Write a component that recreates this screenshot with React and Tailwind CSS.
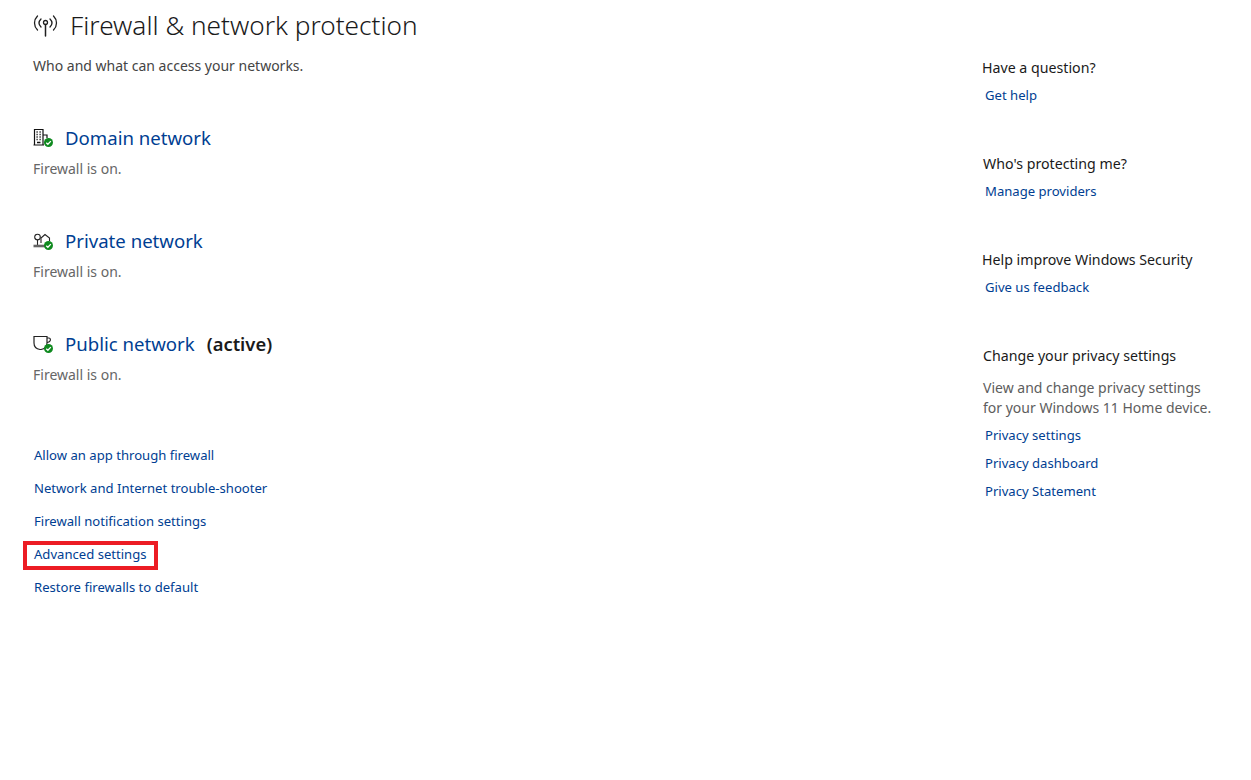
import React from 'react';

function NetworkIcon() {
  return (
    <svg width="26" height="24" viewBox="0 0 26 24" fill="none" stroke="#1f1f1f" strokeWidth="1.3" strokeLinecap="round">
      <path d="M4.5 2C0.5 6 0.5 12 4.5 16" />
      <path d="M20.5 2C24.5 6 24.5 12 20.5 16" />
      <path d="M8 5C5.5 7.5 5.5 10.5 8 13" />
      <path d="M17 5C19.5 7.5 19.5 10.5 17 13" />
      <circle cx="12.5" cy="8.5" r="2" />
      <path d="M12.5 10.5V22" strokeWidth="1.5" />
    </svg>
  );
}

function Check() {
  return (
    <svg className="absolute left-[10.5px] top-[9.5px]" width="9" height="9" viewBox="0 0 10 10">
      <circle cx="5" cy="5" r="5" fill="#0f8a1f" />
      <path d="M2.5 5.2L4.3 7L7.6 3.4" fill="none" stroke="#fff" strokeWidth="1.4" />
    </svg>
  );
}

function DomainIcon() {
  return (
    <div className="relative w-[20px] h-[20px] shrink-0">
      <svg width="20" height="20" viewBox="0 0 20 20" fill="none" stroke="#111" strokeWidth="1.2">
        <path d="M1.5 17V1.5H10V17M10 7H14V10M0.5 17H11" />
        <path d="M3.5 4H4.7M6.5 4H7.7M3.5 6.5H4.7M6.5 6.5H7.7M3.5 9H4.7M6.5 9H7.7M3.5 11.5H4.7M6.5 11.5H7.7M4 14.5H7.5" strokeWidth="1.3" />
      </svg>
      <Check />
    </div>
  );
}

function PrivateIcon() {
  return (
    <div className="relative w-[20px] h-[20px] shrink-0">
      <svg width="20" height="20" viewBox="0 0 20 20" fill="none" stroke="#222" strokeWidth="1.1">
        <circle cx="4.5" cy="6" r="2.8" />
        <path d="M4.5 8.8V14" />
        <path d="M8 12V7L12 3.5L16.5 7V10" />
        <path d="M0.5 15H14" stroke="#666" strokeWidth="2.6" />
      </svg>
      <Check />
    </div>
  );
}

function PublicIcon() {
  return (
    <div className="relative w-[20px] h-[20px] shrink-0">
      <svg width="20" height="20" viewBox="0 0 20 20" fill="none" stroke="#222" strokeWidth="1.2">
        <path d="M1 2.5H14V9C14 12.5 11.5 15 8 15.5H7C3.5 15 1 12.5 1 9Z" />
        <path d="M14 4H16C17.6 4 17.6 6 17 7C16.5 7.8 15.5 8.3 14 8.5" />
      </svg>
      <Check />
    </div>
  );
}

function Network({ icon, name, active }) {
  return (
    <div className="h-[103px]">
      <div className="flex items-center h-[28px]">
        <div className="w-[32px]">{icon}</div>
        <a className="text-[18.6px] text-[#003e92]">{name}</a>
        {active && <span className="ml-[12px] text-[18.4px] font-semibold text-[#1a1a1a]">(active)</span>}
      </div>
      <p className="mt-[7px] text-[14px] leading-[20px] text-[#666]">Firewall is on.</p>
    </div>
  );
}

function SideBlock({ title, desc, links, indent = 'pl-0' }) {
  return (
    <div className="mb-[42px]">
      <h3 className={`text-[14.2px] leading-[20px] text-[#1a1a1a] ${indent}`}>{title}</h3>
      {desc && <p className="mt-[12px] pl-[1px] text-[14px] leading-[20px] text-[#5d5d5d] whitespace-pre-line">{desc}</p>}
      <div className="mt-[6px] flex flex-col pl-[3px]">
        {links.map((l) => (
          <a key={l} className="h-[28px] leading-[20px] pt-[1px] text-[13.1px] text-[#003e92]">{l}</a>
        ))}
      </div>
    </div>
  );
}

export default function App() {
  return (
    <div className="flex min-h-screen bg-white font-['Noto_Sans','Open_Sans',sans-serif]">
      <div className="w-[982px] shrink-0 pl-[33px]">
        <div className="flex items-center h-[50px] pt-[1px]">
          <div className="w-[37px]"><NetworkIcon /></div>
          <h1 className="text-[26.2px] font-light text-[#1a1a1a]">Firewall &amp; network protection</h1>
        </div>
        <p className="mt-[6px] text-[14px] leading-[20px] text-[#444]">Who and what can access your networks.</p>
        <div className="mt-[48px]">
          <Network icon={<DomainIcon />} name="Domain network" />
          <Network icon={<PrivateIcon />} name="Private network" />
          <Network icon={<PublicIcon />} name="Public network" active />
        </div>
        <div className="mt-[6px] pl-[1px] flex flex-col text-[13.1px] text-[#003e92]">
          <a className="h-[33px] leading-[33px]">Allow an app through firewall</a>
          <a className="h-[33px] leading-[33px]">Network and Internet trouble-shooter</a>
          <a className="h-[33px] leading-[33px]">Firewall notification settings</a>
          <a className="h-[33px] leading-[33px] relative">
            Advanced settings
            <span className="absolute left-[-11px] top-[3px] w-[135px] h-[29px] border-[4px] border-[#ec1c24]" />
          </a>
          <a className="h-[33px] leading-[33px]">Restore firewalls to default</a>
        </div>
      </div>
      <div className="flex-1 pt-[58px]">
        <SideBlock title="Have a question?" links={['Get help']} />
        <SideBlock title="Who's protecting me?" indent="pl-[1px]" links={['Manage providers']} />
        <SideBlock title="Help improve Windows Security" links={['Give us feedback']} />
        <SideBlock
          title="Change your privacy settings"
          indent="pl-[1px]"
          desc={'View and change privacy settings\nfor your Windows 11 Home device.'}
          links={['Privacy settings', 'Privacy dashboard', 'Privacy Statement']}
        />
      </div>
    </div>
  );
}
